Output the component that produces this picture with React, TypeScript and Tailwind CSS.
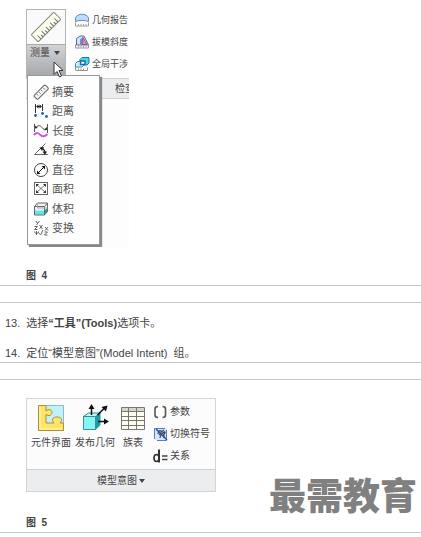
import type { ReactNode } from "react";

type IconProps = { children: ReactNode };

function SmallIcon({ children }: IconProps) {
  return (
    <svg viewBox="0 0 16 16" className="h-4 w-4 shrink-0" fill="none" aria-hidden="true">
      {children}
    </svg>
  );
}

function LargeIcon({ children }: IconProps) {
  return (
    <svg viewBox="0 0 28 28" className="h-7 w-7 shrink-0" fill="none" aria-hidden="true">
      {children}
    </svg>
  );
}

const measureItems: { label: string; icon: ReactNode }[] = [
  {
    label: "摘要",
    icon: (
      <g transform="rotate(-45 8 8)">
        <rect x="0" y="5.5" width="16" height="5.5" rx="1.5" fill="#f4f4f0" stroke="#666" />
        <path d="M3.5 8.500V6.500M6.500 9V6.500M9.500 8.500V6.500M12.500 9V6.500" stroke="#666" strokeWidth="0.8" />
      </g>
    ),
  },
  {
    label: "距离",
    icon: (
      <>
        <path d="M2.5 1v9M9.5 1v7" stroke="#333" />
        <path d="M4 3.500h4" stroke="#222" />
        <path d="M3 3.500l2.500-2v4zM9 3.500l-2.500-2v4z" fill="#222" />
        <circle cx="2.500" cy="12.500" r="1.400" fill="#1560c8" />
        <circle cx="9.500" cy="10.500" r="1.400" fill="#1560c8" />
        <circle cx="13.500" cy="13.500" r="1.400" fill="#1560c8" />
      </>
    ),
  },
  {
    label: "长度",
    icon: (
      <>
        <path d="M1.500 1v8M14.500 1v9" stroke="#555" />
        <path d="M2.500 5C5 2 7 2 9 4.500S12 7 13.500 6.500" stroke="#444" />
        <path d="M2 5.500V2.500L5 5zM14 7V4l-3.500 3z" fill="#333" />
        <path d="M1 12c2.500-3 4.500-2 6.500 0s4 2 7-1" stroke="#cc55d8" strokeWidth="2" />
      </>
    ),
  },
  {
    label: "角度",
    icon: (
      <>
        <path d="M12.500 1.500L1.500 12.500H15" stroke="#666" />
        <path d="M8.500 6c2 1 3.500 2.500 3.500 5" stroke="#111" strokeWidth="1.200" />
        <path d="M6.500 5.500l4.500-.5-2 4zM12 13l-2.500-3.500H14z" fill="#222" />
      </>
    ),
  },
  {
    label: "直径",
    icon: (
      <>
        <circle cx="8" cy="8" r="6.500" fill="#fff" stroke="#444" />
        <path d="M5 11l6-6" stroke="#111" />
        <path d="M4 12V8.500L7.500 12zM12 4v3.500L8.500 4z" fill="#111" />
      </>
    ),
  },
  {
    label: "面积",
    icon: (
      <>
        <rect x="1.500" y="1.500" width="13" height="12" fill="#fff" stroke="#666" />
        <path d="M4 4l8 7M12 4l-8 7" stroke="#555" strokeWidth="0.8" />
        <path d="M3 3h3L3 6zM13 3h-3l3 3zM3 12h3L3 9zM13 12h-3l3-3z" fill="#333" />
      </>
    ),
  },
  {
    label: "体积",
    icon: (
      <>
        <path d="M1.500 5.500l3-3.500h10v8.500l-3 3.500h-10z" fill="#eef3f3" />
        <path d="M2 9.500h9.500v4H2z" fill="#5fe8ea" />
        <path d="M11.500 9.500l3-2.500v3.500l-3 3z" fill="#1f9ba3" />
        <path d="M1.500 5.500l3-3.500h10v8.500l-3 3.500h-10zM1.500 5.500h10l3-3.500M11.500 5.500V14" stroke="#666" />
        <path d="M4.500 2v5h10" stroke="#aaa" />
      </>
    ),
  },
  {
    label: "变换",
    icon: (
      <path
        d="M3 1l1.500 2.500L6.500 1M4.500 3.500L3.500 5M1.500 6.500H4.500L1.500 9.500H4.500M6.500 5l3 4M9.500 5l-3 4M12 7l3 3.500M15 7l-3 3.500M1.500 11.500c0 2.500 4 2.500 4 0M3.500 11v4M5.500 12.500l1.500 2M7.500 15L10 10M11.500 12h3l-3 3h3"
        stroke="#555"
        strokeWidth="0.900"
      />
    ),
  },
];

const inspectItems: { label: string; icon: ReactNode }[] = [
  {
    label: "几何报告",
    icon: (
      <>
        <path d="M1.500 9.500V6C3 1 13 1 14.500 6v3.500c-4-1.500-9-1.500-13 0z" fill="#bcdcff" stroke="#6a8cae" />
        <path d="M1.500 10.500v3.500h13v-3.500M4.500 13.500v-1.500M7 13.500v-1.500M9.500 13.500v-1.500M12 13.500v-1.500" stroke="#999" />
      </>
    ),
  },
  {
    label: "拔模斜度",
    icon: (
      <>
        <path d="M2.500 11V4.500L6 2h4l4.500 9z" fill="#cfe2f8" stroke="#5a6c86" />
        <path d="M6 11V5.500L9 3v8z" fill="#6c95cc" />
        <path d="M9 3.500l4 7H8z" fill="#e983c8" stroke="#8a4a86" strokeWidth="0.8" />
        <path d="M1.500 10.500v3.500h13v-3.500M4.500 13.500v-1.500M7 13.500v-1.500M9.500 13.500v-1.500M12 13.500v-1.500" stroke="#999" />
      </>
    ),
  },
  {
    label: "全局干涉",
    icon: (
      <>
        <path d="M6 3.500l2-2h7v5.500l-2 2H6z" fill="#4fd5e2" stroke="#1b7f92" />
        <path d="M1.500 7.500l2-2H10v3.500l-2 2H1.500z" fill="#c9eff6" stroke="#3f8fa8" />
        <path d="M6.500 5H11v3.500H6.500z" fill="#fff" stroke="#1f62b8" strokeWidth="1.400" />
        <path d="M1.500 11v3.500h12V11.500M4.500 14v-1.500M7 14v-1.500M9.500 14v-1.500" stroke="#999" />
      </>
    ),
  },
];

const modelTools: { label: string; width: string; icon: ReactNode }[] = [
  {
    label: "元件界面",
    width: "w-11",
    icon: (
      <>
        <path d="M2.500 1.500h24v25h-24z" fill="#c0f2fa" stroke="#8cbccb" />
        <path
          d="M1.500 1.500H9v5.500c2.500-2.500 6-1.500 6 1.500s-3.500 4-6 2V19h8c-3-3-1.500-6 3-6s6 3 3 6h3.500v7.500h-25z"
          fill="#ffe46a"
          stroke="#b38e35"
        />
        <path d="M3 3v22h22" stroke="#fff6b8" />
      </>
    ),
  },
  {
    label: "发布几何",
    width: "w-11",
    icon: (
      <>
        <path d="M2.500 12.500l5-3.500h12v12l-5 5h-12z" fill="#1c9da2" />
        <path d="M2.500 12.500h12v13h-12z" fill="#84f6f6" stroke="#3c9095" />
        <path d="M2.500 12.500l5-3.500h12l-5 3.500z" fill="#c5f2ee" stroke="#3c8a8f" />
        <path d="M10.500 11V4M16.500 11l7-7M17 17.500h7" stroke="#111" strokeWidth="1.500" />
        <path d="M10.500 0l3 5h-6zM26.500 1.500l-1.500 6-4.500-4.500zM28 17.500l-5 3v-6z" fill="#111" />
      </>
    ),
  },
  {
    label: "族表",
    width: "w-8",
    icon: (
      <>
        <rect x="2.500" y="3.500" width="23" height="22" fill="#fffff6" />
        <path d="M3 4h22v3.500H3z" fill="#d6d6ce" />
        <path
          d="M2.500 3.500h23v22h-23zM9.500 3.500v22M17.500 3.500v22M2.500 7.500h23M2.500 12.500h23M2.500 16.500h23M2.500 21.500h23"
          stroke="#77776f"
        />
      </>
    ),
  },
];

const modelCommands: { label: string; icon: ReactNode }[] = [
  {
    label: "参数",
    icon: (
      <path
        d="M5 2.500C2 2.500 2 4 2 5v6c0 1 0 2.500 3 2.500M9.500 2.500c3 0 3 1.500 3 2.500v6c0 1 0 2.500-3 2.500"
        stroke="#555"
        strokeWidth="1.600"
      />
    ),
  },
  {
    label: "切换符号",
    icon: (
      <>
        <rect x="2" y="2" width="12" height="12" fill="#d5e6fb" />
        <path d="M1.500 13V2.500H12M13.500 4v10.500H4" stroke="#4f7fcc" />
        <path d="M3 3l11 11" stroke="#2456b0" strokeWidth="1.400" />
        <path d="M5 8c0-3 2-4 3-3s-1 3-2 4M8 6l3-2M7 12c0-2 2-5 4-6s1 2-1 3M11 9v3" stroke="#3a4558" strokeWidth="1.200" />
      </>
    ),
  },
  {
    label: "关系",
    icon: (
      <>
        <path d="M6 1.500v13" stroke="#333" strokeWidth="2" />
        <ellipse cx="3.500" cy="10" rx="2.500" ry="3.500" stroke="#333" strokeWidth="1.600" />
        <path d="M9 8h5.500M9 11.500h5.500" stroke="#444" strokeWidth="1.500" />
      </>
    ),
  },
];

function Caret() {
  return (
    <svg viewBox="0 0 6 4" className="h-1 w-1.5" aria-hidden="true">
      <path d="M0 0h6L3 4z" fill="#444" />
    </svg>
  );
}

function Ruler() {
  return (
    <svg viewBox="0 0 32 32" className="h-8 w-8" fill="none" aria-hidden="true">
      <g transform="rotate(-45 16 16)">
        <rect x="0" y="11" width="32" height="10" rx="1" fill="#fdfdee" stroke="#85857c" />
        <path d="M4 21v-5M7 21v-3M10 21v-5M13 21v-3M16 21v-5M19 21v-3M22 21v-5M25 21v-3M28 21v-5" stroke="#66665e" />
      </g>
    </svg>
  );
}

function MeasureFigure() {
  return (
    <div className="relative h-[238px] w-[103px] overflow-hidden bg-[#fdfdfd] text-[10px] leading-4 text-[#444]">
      <div className="flex h-[69px]">
        <button type="button" className="flex w-10 shrink-0 flex-col border border-[#b4b4b4] bg-[#fafafa]">
          <span className="flex h-[34px] w-full items-center justify-center">
            <Ruler />
          </span>
          <span className="flex w-full flex-1 items-start gap-1 border-t border-[#aaa] bg-linear-to-b from-[#d2d3d5] to-[#a5a6a9] pl-[3px]">
            <span>测量</span>
            <span className="flex h-4 items-center">
              <Caret />
            </span>
          </span>
        </button>
        <div className="ml-2 flex flex-col gap-1.5 pt-[3px] text-[9px]">
          {inspectItems.map((item) => (
            <button key={item.label} type="button" className="flex h-4 items-center gap-0.5 whitespace-nowrap">
              <SmallIcon>{item.icon}</SmallIcon>
              {item.label}
            </button>
          ))}
        </div>
      </div>
      <div className="h-[21px] border-y border-[#d0d1d3] bg-[#ecedef] pl-[89px] leading-5 whitespace-nowrap">检查</div>

      <ul className="absolute top-[66px] left-px grid h-[170px] w-[73px] auto-rows-fr border border-[#999] bg-[#fefefe] py-1.5 text-[11px] text-[#555] shadow-[2px_2px_1px_#888]">
        {measureItems.map((item) => (
          <li key={item.label} className="flex">
            <button type="button" className="flex w-full items-center gap-[3px] pl-[5px]">
              <SmallIcon>{item.icon}</SmallIcon>
              {item.label}
            </button>
          </li>
        ))}
      </ul>
      <svg viewBox="0 0 11 17" className="absolute top-[52px] left-[27px] h-[17px] w-[11px]" aria-hidden="true">
        <path d="M1 1v12.500l3-3L6.500 16l2-1L6 9.500h4z" fill="#fff" stroke="#333" />
      </svg>
    </div>
  );
}

function ModelIntentFigure() {
  return (
    <div className="w-[190px] border border-[#d3d4d6] bg-[#fcfcfc] text-[10px] leading-4 text-[#444]">
      <div className="flex h-[70px] pl-0.5">
        {modelTools.map((tool) => (
          <button
            key={tool.label}
            type="button"
            className={`flex ${tool.width} shrink-0 flex-col items-center gap-[3px] pt-[5px] whitespace-nowrap`}
          >
            <LargeIcon>{tool.icon}</LargeIcon>
            {tool.label}
          </button>
        ))}
        <div className="ml-1 flex flex-col gap-1.5 pt-[5px]">
          {modelCommands.map((command) => (
            <button key={command.label} type="button" className="flex h-4 items-center gap-px whitespace-nowrap">
              <SmallIcon>{command.icon}</SmallIcon>
              {command.label}
            </button>
          ))}
        </div>
      </div>
      <button
        type="button"
        className="flex h-[22px] w-full items-center justify-center gap-0.5 border-t border-[#d0d1d3] bg-[#ecedef]"
      >
        模型意图
        <Caret />
      </button>
    </div>
  );
}

export default function App() {
  return (
    <main
      lang="zh-CN"
      className="bg-white font-['Liberation_Sans','Noto_Sans_CJK_SC',sans-serif] text-[11px] leading-4 text-[#444]"
    >
      <figure className="border-b border-[#c8c8c8] pt-[9px] pb-px pl-[26px]">
        <MeasureFigure />
        <figcaption className="mt-[21px] text-[10px] font-bold">图&nbsp; 4</figcaption>
      </figure>

      <ol className="mt-4 flex flex-col gap-3.5 border-y border-[#c8c8c8] pt-3 pb-px pl-[5px]">
        <li className="flex gap-1.5">
          <span>13.</span>
          <p>
            选择<b>“工具”(Tools)</b>选项卡。
          </p>
        </li>
        <li className="flex gap-1.5">
          <span>14.</span>
          <p>定位“模型意图”(Model Intent)&nbsp; 组。</p>
        </li>
      </ol>

      <figure className="relative mt-4 border-y border-[#c8c8c8] pt-[18px] pb-px pl-[26px]">
        <ModelIntentFigure />
        <figcaption className="mt-[23px] text-[10px] font-bold">图&nbsp; 5</figcaption>
        <span className="absolute right-1 bottom-3.5 text-[37px] leading-10 font-black text-[#808080]">最需教育</span>
      </figure>
    </main>
  );
}
